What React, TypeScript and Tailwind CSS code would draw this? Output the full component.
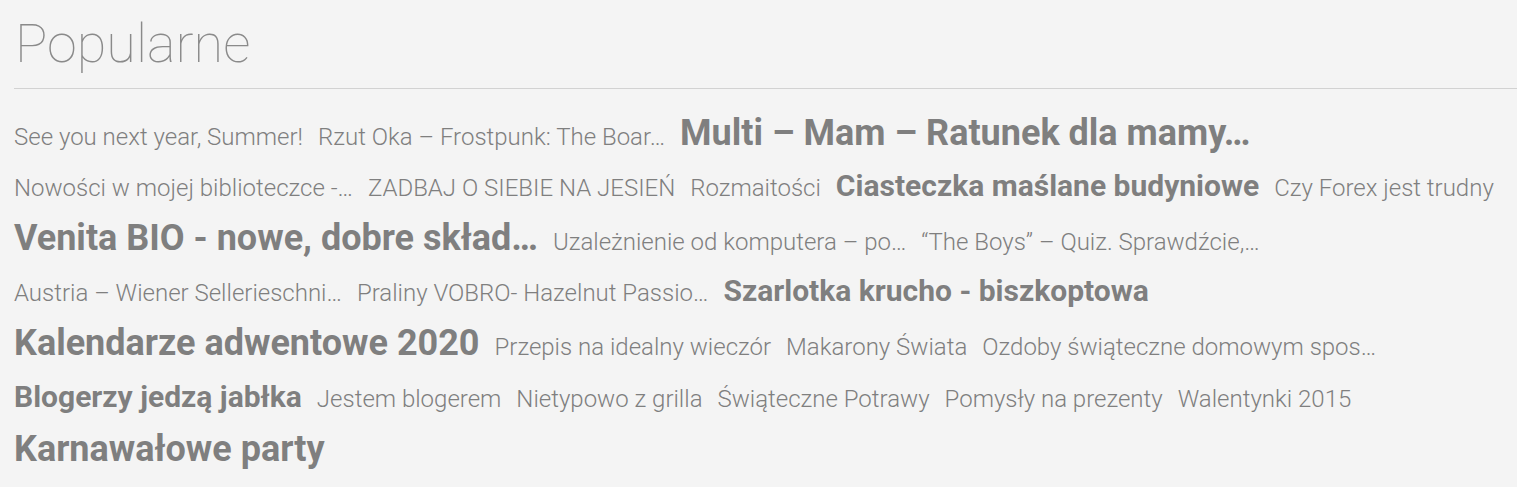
import React from 'react'

type Tag = {
  label: string
  size: string
  bold?: boolean
}

// Sizes follow the post's popularity — bold ones are the top hits
const TAGS: Tag[] = [
  { label: 'See you next year, Summer!', size: 'text-[24px]' },
  { label: 'Rzut Oka – Frostpunk: The Boar…', size: 'text-[24px]' },
  { label: 'Multi – Mam – Ratunek dla mamy…', size: 'text-[36px]', bold: true },
  { label: 'Nowości w mojej biblioteczce -…', size: 'text-[24px]' },
  { label: 'ZADBAJ O SIEBIE NA JESIEŃ', size: 'text-[24px]' },
  { label: 'Rozmaitości', size: 'text-[24px]' },
  { label: 'Ciasteczka maślane budyniowe', size: 'text-[30px]', bold: true },
  { label: 'Czy Forex jest trudny', size: 'text-[24px]' },
  { label: 'Venita BIO - nowe, dobre skład…', size: 'text-[36px]', bold: true },
  { label: 'Uzależnienie od komputera – po…', size: 'text-[24px]' },
  { label: '“The Boys” – Quiz. Sprawdźcie,…', size: 'text-[24px]' },
  { label: 'Austria – Wiener Sellerieschni…', size: 'text-[24px]' },
  { label: 'Praliny VOBRO- Hazelnut Passio…', size: 'text-[24px]' },
  { label: 'Szarlotka krucho - biszkoptowa', size: 'text-[30px]', bold: true },
  { label: 'Kalendarze adwentowe 2020', size: 'text-[36px]', bold: true },
  { label: 'Przepis na idealny wieczór', size: 'text-[24px]' },
  { label: 'Makarony Świata', size: 'text-[24px]' },
  { label: 'Ozdoby świąteczne domowym spos…', size: 'text-[24px]' },
  { label: 'Blogerzy jedzą jabłka', size: 'text-[30px]', bold: true },
  { label: 'Jestem blogerem', size: 'text-[24px]' },
  { label: 'Nietypowo z grilla', size: 'text-[24px]' },
  { label: 'Świąteczne Potrawy', size: 'text-[24px]' },
  { label: 'Pomysły na prezenty', size: 'text-[24px]' },
  { label: 'Walentynki 2015', size: 'text-[24px]' },
  { label: 'Karnawałowe party', size: 'text-[36px]', bold: true },
]

export default function App() {
  return (
    <div className="min-h-screen bg-[#f4f4f4] pl-[14px] font-['Roboto',sans-serif]">
      <h1 className="pl-px pt-[17px] pb-[17px] border-b border-[#d2d2d2] text-[54px] leading-none font-thin text-[#8a8a8a]">
        Popularne
      </h1>
      <div className="flex flex-wrap items-baseline gap-x-[15px] gap-y-[13px] pt-[23px] pr-4">
        {TAGS.map((t) => (
          <a
            key={t.label}
            href="#"
            className={`${t.size} leading-[1.2] whitespace-nowrap text-[#7f7f7f] ${
              t.bold ? 'font-bold' : 'font-light'
            }`}
          >
            {t.label}
          </a>
        ))}
      </div>
    </div>
  )
}
